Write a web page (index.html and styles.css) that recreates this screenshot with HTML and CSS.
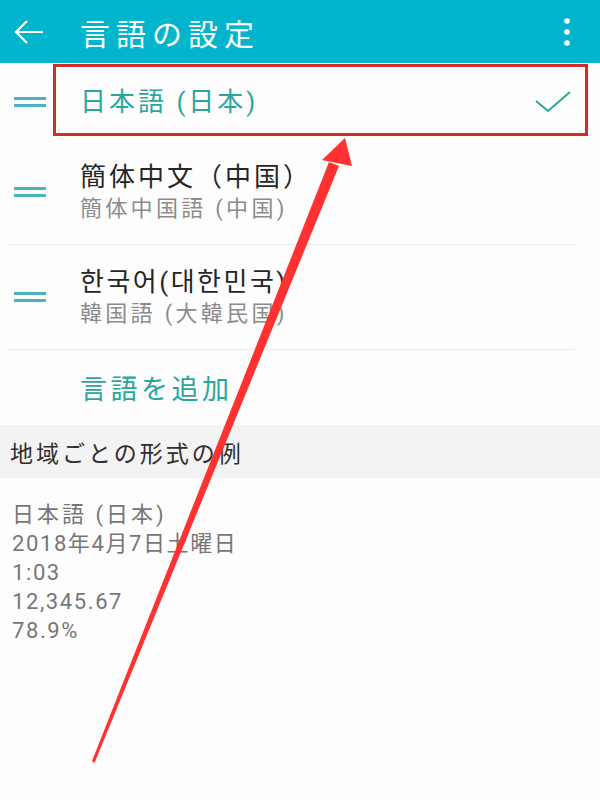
FILE: index.html
```html
<!DOCTYPE html>
<html lang="ja">
<head>
    <meta charset="UTF-8">
    <meta name="viewport" content="width=device-width, initial-scale=1.0">
    <title>言語の設定</title>
    <link rel="stylesheet" href="styles.css">
</head>
<body>
    <div class="screen">
        <div class="appbar">
            <svg class="back-icon" width="30" height="26" viewBox="0 0 30 26">
                <path d="M29 13H2M13 2L2 13l11 11" fill="none" stroke="#fff" stroke-width="2.2"/>
            </svg>
            <h1>言語の設定</h1>
            <svg class="more-icon" width="8" height="30" viewBox="0 0 8 30">
                <circle cx="4" cy="4" r="2.8" fill="#fff"/>
                <circle cx="4" cy="15" r="2.8" fill="#fff"/>
                <circle cx="4" cy="26" r="2.8" fill="#fff"/>
            </svg>
        </div>

        <ul class="lang-list">
            <li class="lang-row current">
                <svg class="handle" width="32" height="10" viewBox="0 0 32 10">
                    <path d="M0 1.5h32M0 8.5h32" stroke="#4ab3be" stroke-width="3"/>
                </svg>
                <div class="lang-text">
                    <span class="lang-name">日本語 (日本)</span>
                </div>
                <svg class="check" width="36" height="22" viewBox="0 0 36 22">
                    <path d="M1 10l12 10L35 1" fill="none" stroke="#2aa69d" stroke-width="2"/>
                </svg>
            </li>
            <li class="lang-row">
                <svg class="handle" width="32" height="10" viewBox="0 0 32 10">
                    <path d="M0 1.5h32M0 8.5h32" stroke="#4ab3be" stroke-width="3"/>
                </svg>
                <div class="lang-text">
                    <span class="lang-name">簡体中文（中国）</span>
                    <span class="lang-native">簡体中国語 (中国)</span>
                </div>
            </li>
            <li class="lang-row">
                <svg class="handle" width="32" height="10" viewBox="0 0 32 10">
                    <path d="M0 1.5h32M0 8.5h32" stroke="#4ab3be" stroke-width="3"/>
                </svg>
                <div class="lang-text">
                    <span class="lang-name korean">한국어(대한민국)</span>
                    <span class="lang-native">韓国語 (大韓民国)</span>
                </div>
            </li>
        </ul>

        <div class="add-lang">言語を追加</div>

        <div class="section-head">地域ごとの形式の例</div>

        <div class="examples">
            <div class="ex-cjk">日本語 (日本)</div>
            <div>2018年4月7日土曜日</div>
            <div>1:03</div>
            <div>12,345.67</div>
            <div>78.9%</div>
        </div>

        <!-- annotation drawn over the screenshot -->
        <div class="mark-box"></div>
        <svg class="mark-arrow" width="600" height="800" viewBox="0 0 600 800">
            <polygon points="92,761 94.5,763 339,166 329,162" fill="#ff3131"/>
            <polygon points="345,138 322,160 352,166" fill="#ff3131"/>
        </svg>
    </div>
</body>
</html>
```

FILE: styles.css
```css
* {
    margin: 0;
    padding: 0;
    box-sizing: border-box;
}

body {
    background-color: white;
    font-family: Roboto, "Noto Sans CJK JP", sans-serif;
}

.screen {
    position: relative;
    width: 600px;
    height: 800px;
    overflow: hidden;
    background-color: #fdfdfd;
}

.appbar {
    height: 63px;
    background-color: #02b5cd;
    display: flex;
    align-items: center;
    padding: 0 29px 0 14px;
}
.appbar h1 {
    flex: 1;
    margin-left: 36px;
    color: white;
    font-size: 30px;
    font-weight: normal;
    letter-spacing: 6px;
}

.lang-list {
    list-style: none;
}

.lang-row {
    display: flex;
    align-items: center;
    margin: 0 25px 0 8px;
    padding: 20px 0 20px 6px;
    border-bottom: 1px solid #ececec;
}
.lang-row.current {
    height: 77px;
    padding: 0 4px 0 6px;
    border-bottom: none;
}
.handle {
    flex-shrink: 0;
}
.lang-text {
    flex: 1;
    display: flex;
    flex-direction: column;
    margin-left: 34px;
}
.lang-name {
    font-size: 26px;
    line-height: 34px;
    letter-spacing: 3px;
    color: #262626;
}
.korean {
    letter-spacing: 2.5px;
}
.current .lang-name {
    color: #2aa69d;
}
.lang-native {
    font-size: 22px;
    line-height: 30px;
    letter-spacing: 3.3px;
    color: #8c8c8c;
}

.add-lang {
    height: 75px;
    display: flex;
    align-items: center;
    padding-left: 80px;
    font-size: 27px;
    letter-spacing: 3.5px;
    color: #2aa69d;
}

.section-head {
    height: 53px;
    display: flex;
    align-items: center;
    padding-left: 10px;
    background-color: #f3f3f3;
    font-size: 23px;
    letter-spacing: 3px;
    color: #2e2e2e;
}

.examples {
    padding: 22px 0 0 12px;
    font-size: 22px;
    line-height: 29px;
    letter-spacing: 1.6px;
    color: #777;
}
.ex-cjk {
    letter-spacing: 3px;
}

.mark-box {
    position: absolute;
    left: 53px;
    top: 64px;
    width: 535px;
    height: 72px;
    border: 3px solid #d42a2a;
}

.mark-arrow {
    position: absolute;
    left: 0;
    top: 0;
}
```
